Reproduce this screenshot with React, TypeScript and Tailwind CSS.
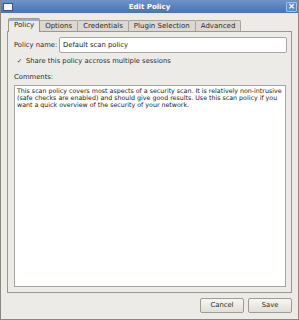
const font = "font-['DejaVu_Sans',sans-serif]";

function Tab({ label, active }: { label: string; active?: boolean }) {
  return active ? (
    <div className="relative z-10 -mb-px flex h-[14px] items-center rounded-t-[2px] border border-b-0 border-[#9d988f] bg-[#edebe7] px-[5px] pb-[1px] text-[7px] text-[#1a1a1a] shadow-[inset_0_2px_0_#8fb0dc]">
      {label}
    </div>
  ) : (
    <div className="-ml-px flex h-[11px] items-center rounded-t-[2px] border border-b-0 border-[#aaa59c] bg-[#dcd8d1] px-[5px] text-[7px] text-[#2a2a2a]">
      {label}
    </div>
  );
}

export default function App() {
  return (
    <div className={`${font} flex h-[320px] w-[299px] flex-col border-b border-l border-r border-[#8a8782] bg-[#edebe7]`}>
      {/* title bar */}
      <div className="flex h-[13px] items-center justify-between bg-gradient-to-b from-[#6d93c9] to-[#4a74ae] pl-[2px] pr-[1px]">
        <div className="h-[8px] w-[10px] border border-[#3b5578] bg-[#f4f4f4]" />
        <div className="pt-[1px] text-[7px] font-bold text-white">Edit Policy</div>
        <div className="flex h-[10px] w-[11px] items-center justify-center rounded-[1px] border border-[#a8c2e6] bg-[#5f8ac6] text-[9px] font-bold leading-none text-white">
          ×
        </div>
      </div>

      <div className="flex flex-1 flex-col pl-[6px] pr-[6px] pt-[5px]">
        {/* tabs */}
        <div className="flex items-end pl-[1px]">
          <Tab label="Policy" active />
          <Tab label="Options" />
          <Tab label="Credentials" />
          <Tab label="Plugin Selection" />
          <Tab label="Advanced" />
        </div>

        {/* panel */}
        <div className="flex h-[262px] flex-col border border-[#9d988f] bg-[#edebe7] pl-[6px] pr-[4px] pt-[5px] pb-[5px] text-[6.8px] text-[#2a2a2a]">
          <div className="flex items-center">
            <span className="w-[45px] shrink-0">Policy name:</span>
            <div className="flex h-[16px] flex-1 items-center rounded-[2px] border border-[#a9a59e] bg-white px-[3px] text-[#1a1a1a]">
              Default scan policy
            </div>
          </div>

          <div className="mt-[3px] flex h-[10px] items-center gap-[3px] pl-[2px]">
            <span className="flex h-[7px] w-[7px] items-center justify-center text-[6.5px] leading-none text-[#333]">✓</span>
            <span>Share this policy accross multiple sessions</span>
          </div>

          <div className="mt-[6px] flex h-[10px] items-center">Comments:</div>

          <div className="mt-[3px] mr-[1px] flex-1 border border-[#a9a59e] bg-white px-[2px] pt-[1px] text-[6.3px] leading-[7px] text-[#1a1a1a]">
            This scan policy covers most aspects of a security scan. It is relatively non-intrusive (safe checks are enabled) and should give good results. Use this scan policy if you want a quick overview of the security of your network.
          </div>
        </div>

        {/* buttons */}
        <div className="mt-[5px] flex justify-end gap-[4px]">
          <button className="h-[15px] w-[44px] rounded-[2px] border border-[#a09b93] bg-gradient-to-b from-[#f7f6f3] to-[#e2ded7] text-[6.8px] text-[#2a2a2a]">
            Cancel
          </button>
          <button className="h-[15px] w-[44px] rounded-[2px] border border-[#a09b93] bg-gradient-to-b from-[#f7f6f3] to-[#e2ded7] text-[6.8px] text-[#2a2a2a]">
            Save
          </button>
        </div>
      </div>
    </div>
  );
}
